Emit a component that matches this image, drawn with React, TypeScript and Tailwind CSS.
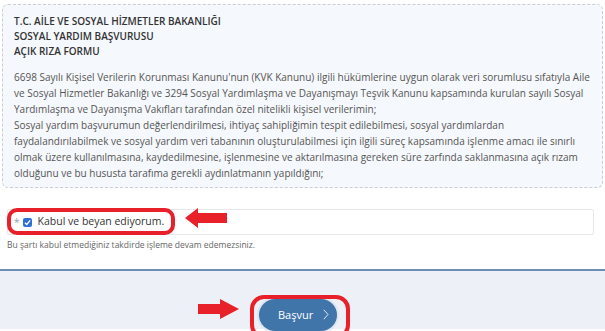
import React from "react";

const ArrowLeft = () => (
  <svg width="44" height="22" viewBox="0 0 44 22" className="absolute left-[185px] top-[207px]">
    <polygon points="0,11 13,1 13,6 42,6 42,16 13,16 13,21" fill="#e8202a" />
  </svg>
);

const ArrowRight = () => (
  <svg width="44" height="22" viewBox="0 0 44 22" className="absolute left-[197px] top-[298px]">
    <polygon points="42,11 23,1 23,6 1,6 1,16 23,16 23,21" fill="#e8202a" />
  </svg>
);

export default function App() {
  return (
    <div className="relative w-[605px] h-[331px] overflow-hidden bg-white font-['Open_Sans',sans-serif] text-[#444]">
      <div className="pt-[4px] pl-[2px] pr-[2px]">
        <div className="rounded-[6px] border border-dashed border-[#c9ced6] bg-[#f5f8fc] pl-[11px] pr-[6px] pt-[9px] pb-[6px]">
          <div className="text-[10px] font-semibold leading-[15px] text-[#333]">
            <div>T.C. AİLE VE SOSYAL HİZMETLER BAKANLIĞI</div>
            <div>SOSYAL YARDIM BAŞVURUSU</div>
            <div>AÇIK RIZA FORMU</div>
          </div>
          <p className="mt-[10px] text-[10px] leading-[16px] text-[#555]">
            6698 Sayılı Kişisel Verilerin Korunması Kanunu'nun (KVK Kanunu) ilgili hükümlerine uygun olarak veri sorumlusu sıfatıyla Aile ve Sosyal Hizmetler Bakanlığı ve 3294 Sosyal Yardımlaşma ve Dayanışmayı Teşvik Kanunu kapsamında kurulan sayılı Sosyal Yardımlaşma ve Dayanışma Vakıfları tarafından özel nitelikli kişisel verilerimin;
            <br />
            Sosyal yardım başvurumun değerlendirilmesi, ihtiyaç sahipliğimin tespit edilebilmesi, sosyal yardımlardan
            <br />
            faydalandırılabilmek ve sosyal yardım veri tabanının oluşturulabilmesi için ilgili süreç kapsamında işlenme amacı ile sınırlı olmak üzere kullanılmasına, kaydedilmesine, işlenmesine ve aktarılmasına gereken süre zarfında saklanmasına açık rızam olduğunu ve bu hususta tarafıma gerekli aydınlatmanın yapıldığını;
          </p>
        </div>
      </div>

      <div className="mt-[21px] ml-[7px] w-[587px] h-[26px] flex items-center rounded-[2px] border border-[#e6e8eb] bg-white pl-[6px]">
        <span className="text-[10px] text-[#9aa0a8] mr-[3px]">*</span>
        <span className="w-[9px] h-[9px] rounded-[2px] bg-[#2f6fd6] flex items-center justify-center mr-[6px]">
          <svg width="7" height="7" viewBox="0 0 8 8">
            <path d="M1 4.2 L3.2 6.3 L7 1.6" stroke="white" strokeWidth="1.5" fill="none" />
          </svg>
        </span>
        <span className="text-[10.5px] text-[#333]">Kabul ve beyan ediyorum.</span>
      </div>

      <div className="mt-[4px] ml-[7px] text-[8.5px] text-[#666]">
        Bu şartı kabul etmediğiniz takdirde işleme devam edemezsiniz.
      </div>

      <div className="mt-[17px] h-[60px] border-t-2 border-[#6d8fb6] bg-[#edf1f7] pl-[259px] pt-[28px]">
        <button className="flex items-center gap-[10px] h-[32px] w-[78px] rounded-full bg-[#4075aa] pl-[19px] text-[11px] text-white shadow-[0_0_0_2px_#dfe6ef]">
          Başvur
          <svg width="6" height="11" viewBox="0 0 6 11">
            <path d="M0.8 0.8 L5 5.5 L0.8 10.2" stroke="#dde7f2" strokeWidth="1" fill="none" />
          </svg>
        </button>
      </div>

      <div className="absolute left-[7px] top-[208px] w-[168px] h-[27px] rounded-[10px] border-[4px] border-[#e8202a]" />
      <div className="absolute left-[250px] top-[295px] w-[100px] h-[44px] rounded-[14px] border-[4px] border-[#e8202a]" />
      <ArrowLeft />
      <ArrowRight />
    </div>
  );
}
